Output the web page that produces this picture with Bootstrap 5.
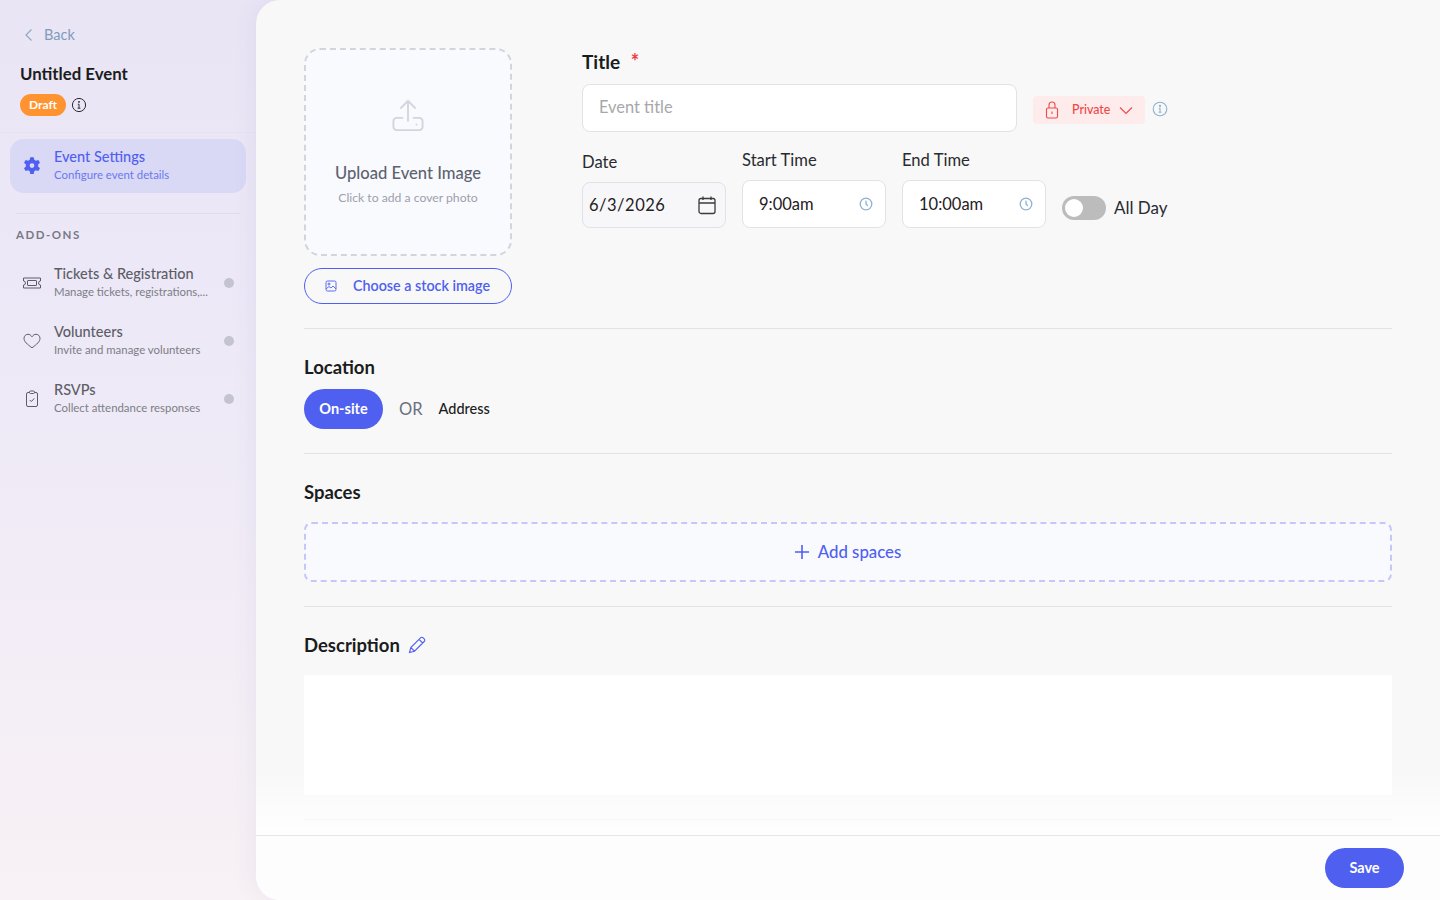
<!DOCTYPE html>
<html lang="en">
<head>
    <meta charset="UTF-8">
    <meta name="viewport" content="width=device-width, initial-scale=1.0">
    <title>Untitled Event</title>
    <link href="https://cdn.jsdelivr.net/npm/bootstrap@5.3.0/dist/css/bootstrap.min.css" rel="stylesheet">
    <style>
        html, body { height: 100%; overflow: hidden; }
        body {
            font-family: "Lato", "Noto Sans", sans-serif;
            color: #1f2024;
            background: linear-gradient(180deg, #e9e5f5 0%, #ece8f7 30%, #f2edf6 70%, #f8f1f5 100%);
        }
        .app-shell { height: 900px; }
        .side-bar { width: 256px; flex: none; }
        .side-top { padding: 26px 20px 0; height: 133px; border-bottom: 1px solid #e6e3f1; }
        .back-link { color: #7f9cbb; font-size: 14.5px; line-height: 18px; padding-left: 4px; gap: 10px; margin-bottom: 19px; }
        .event-name { font-size: 16.8px; font-weight: 700; line-height: 22px; margin-bottom: 9px; color: #1b1c20; }
        .draft-row { gap: 5px; }
        .draft-pill { background: #ff9330; color: #fff; font-size: 12px; font-weight: 700; height: 22px; width: 46px; border-radius: 11px; }
        .side-item { margin: 0 10px; height: 54px; padding-left: 12px; padding-right: 12px; border-radius: 14px; gap: 12px; }
        .side-item.is-active { background: #d9d8f5; margin-top: 6px; }
        .side-ico { width: 20px; flex: none; }
        .item-title { font-size: 14.5px; line-height: 18px; font-weight: 500; color: #5c5d66; white-space: nowrap; }
        .item-sub { font-size: 11.4px; line-height: 16px; margin-top: 1px; margin-bottom: 2px; color: #7c7d86; white-space: nowrap; }
        .is-active .item-title { color: #4f5ff0; }
        .is-active .item-sub { color: #6a78f0; }
        .status-dot { width: 10px; height: 10px; border-radius: 50%; background: #c4c3d0; margin-left: auto; flex: none; }
        .side-rule { margin: 20px 16px 13px; height: 1px; background: #dedbea; }
        .side-label { font-size: 11.5px; font-weight: 700; letter-spacing: 1.5px; color: #787985; padding-left: 16px; line-height: 16px; margin-bottom: 13px; }
        .addon-list { gap: 4px; }
        .main-panel { flex: 1; background: #f8f8f8; border-radius: 24px 0 0 24px; overflow: hidden; min-width: 0; box-shadow: -6px 0 20px rgba(80, 70, 140, .05); }
        .main-scroll { flex: 1; overflow: hidden; padding: 48px 48px 0; position: relative; min-height: 0; }
        .upload-col { width: 208px; flex: none; }
        .upload-box { height: 208px; border: 2px dashed #d3d5de; border-radius: 16px; background: #f9fafe; padding-top: 49px; }
        .upload-title { font-size: 16.6px; line-height: 22px; font-weight: 500; color: #5d6270; margin-top: 29px; }
        .upload-sub { font-size: 12.2px; line-height: 16px; color: #9c9fab; margin-top: 6px; }
        .stock-btn { height: 36px; margin-top: 12px; border: 1px solid #4f5ff0; border-radius: 18px; color: #4f5ff0; font-size: 14.3px; font-weight: 600; padding-left: 20px; gap: 16px; background: transparent; }
        .form-col { margin-left: 70px; }
        .title-label { font-size: 19px; font-weight: 700; line-height: 24px; height: 24px; margin: 2px 0 10px; color: #1b1c20; }
        .req-mark { color: #f23b3b; margin-left: 6px; font-size: 20px; line-height: 1; }
        .field-box { background: #fff; border: 1px solid #e1e1ea; border-radius: 8px; height: 48px; font-size: 16.5px; }
        .title-input { width: 435px; padding-left: 16px; padding-bottom: 2px; color: #a7a7ab; font-size: 16.4px; }
        .private-btn { width: 112px; height: 28px; margin-left: 16px; margin-top: 4px; background: #feebeb; color: #f04848; border-radius: 4px; font-size: 12.4px; font-weight: 500; padding-left: 12px; }
        .private-text { margin-left: 13px; margin-right: 9px; }
        .info-mini { margin-left: 7px; margin-top: 2px; }
        .date-row { margin-top: 18px; }
        .field-label { font-size: 16.6px; line-height: 20px; color: #2a2b30; }
        .date-label { padding-top: 2px; }
        .date-box { width: 144px; background: #f7f7f9; padding: 0 8px 0 6px; margin-top: 10px; height: 46px; letter-spacing: .5px; }
        .time-box { width: 144px; padding: 0 12px 0 16px; margin-top: 10px; }
        .day-toggle { height: 40px; }
        .toggle-track { width: 44px; height: 24px; border-radius: 12px; background: #bcbcbc; padding: 3px 0 0 3px; }
        .toggle-knob { width: 18px; height: 18px; border-radius: 50%; background: #fff; }
        .all-day { font-size: 17px; line-height: 20px; color: #2a2b30; }
        .section-rule { height: 1px; background: #e2e2e4; margin: 24px 0; }
        .section-head { font-size: 18.5px; font-weight: 700; line-height: 28px; color: #1b1c20; }
        .onsite-btn { width: 79px; height: 40px; border-radius: 20px; background: #4f5ff0; color: #fff; font-size: 14.5px; font-weight: 700; margin-top: 8px; }
        .or-text { font-size: 16.5px; color: #6a7080; margin-left: 16px; margin-right: 16px; margin-top: 8px; }
        .addr-text { font-size: 14.5px; font-weight: 500; color: #1b1c20; margin-top: 8px; }
        .spaces-box { height: 60px; border: 2px dashed #c3c8f8; border-radius: 8px; background: #f9fafe; color: #4f5ff0; font-size: 16.8px; font-weight: 500; gap: 9px; margin-top: 16px; }
        .desc-box { height: 120px; background: #fff; margin-top: 16px; }
        .fade-over { position: absolute; left: 0; right: 0; bottom: 0; height: 65px; background: linear-gradient(180deg, rgba(255,255,255,0), rgba(255,255,255,.92)); }
        .foot-bar { height: 65px; flex: none; background: #fdfdfd; border-top: 1px solid #e6e6e6; padding-right: 36px; }
        .save-btn { width: 79px; height: 40px; border-radius: 20px; background: #4f5ff0; color: #fff; font-size: 14.5px; font-weight: 700; }
    </style>
</head>
<body>
    <div class="app-shell d-flex">
        <div class="side-bar">
            <div class="side-top">
                <div class="back-link d-flex align-items-center">
                    <svg width="10" height="14" viewBox="0 0 10 14" fill="none" stroke="#8fa8c4" stroke-width="1.2"><path d="M7.5 1.5 2 7l5.5 5.5"/></svg>
                    <span>Back</span>
                </div>
                <div class="event-name">Untitled Event</div>
                <div class="draft-row d-flex align-items-center">
                    <span class="draft-pill d-inline-flex align-items-center justify-content-center">Draft</span>
                    <svg width="16" height="16" viewBox="0 0 16 16" fill="none" stroke="#2a2b30" stroke-width="1"><circle cx="8" cy="8" r="6.6"/><path d="M6.8 7.2H8v4M6.6 11.2h2.8"/><circle cx="8" cy="4.9" r=".5" fill="#2a2b30"/></svg>
                </div>
            </div>
            <div class="side-item is-active d-flex align-items-center">
                <div class="side-ico d-flex justify-content-center">
                    <svg width="20" height="20" viewBox="0 0 24 24" fill="#4f5ff0"><path fill-rule="evenodd" d="M14 1.5h-4l-.7 3a8 8 0 0 0-2 1.2L4.400 4.700 2.400 8.200l2.300 2a8 8 0 0 0 0 2.400l-2.300 2 2 3.500 2.900-1a8 8 0 0 0 2 1.200l.7 3.200h4l.7-3.200a8 8 0 0 0 2-1.200l2.900 1 2-3.500-2.300-2a8 8 0 0 0 0-2.400l2.300-2-2-3.500-2.900 1a8 8 0 0 0-2-1.200zM12 8.600a2.900 2.900 0 1 1 0 5.800 2.900 2.900 0 0 1 0-5.800z"/></svg>
                </div>
                <div>
                    <div class="item-title">Event Settings</div>
                    <div class="item-sub">Configure event details</div>
                </div>
            </div>
            <div class="side-rule"></div>
            <div class="side-label">ADD-ONS</div>
            <div class="addon-list d-flex flex-column">
                <div class="side-item d-flex align-items-center">
                    <div class="side-ico d-flex justify-content-center">
                        <svg width="20" height="14" viewBox="0 0 20 14" fill="none" stroke="#5c5d66" stroke-width="1"><path d="M1.500 2h17v3a2 2 0 0 0 0 4v3h-17V9a2 2 0 0 0 0-4z"/><rect x="5.500" y="4.500" width="9" height="5" rx=".5"/></svg>
                    </div>
                    <div>
                        <div class="item-title">Tickets &amp; Registration</div>
                        <div class="item-sub">Manage tickets, registrations,...</div>
                    </div>
                    <span class="status-dot"></span>
                </div>
                <div class="side-item d-flex align-items-center">
                    <div class="side-ico d-flex justify-content-center">
                        <svg width="18" height="16" viewBox="0 0 18 16" fill="none" stroke="#5c5d66" stroke-width="1"><path d="M9 14.800C4 11.200 1 8.500 1 5.300 1 3 2.800 1.300 5 1.300c1.600 0 3 .9 4 2.500 1-1.600 2.400-2.500 4-2.500 2.200 0 4 1.700 4 4 0 3.200-3 5.900-8 9.500z"/></svg>
                    </div>
                    <div>
                        <div class="item-title">Volunteers</div>
                        <div class="item-sub">Invite and manage volunteers</div>
                    </div>
                    <span class="status-dot"></span>
                </div>
                <div class="side-item d-flex align-items-center">
                    <div class="side-ico d-flex justify-content-center">
                        <svg width="14" height="18" viewBox="0 0 14 18" fill="none" stroke="#5c5d66" stroke-width="1"><rect x="1.500" y="2.500" width="11" height="14" rx="1.500"/><rect x="4.500" y="1" width="5" height="2.500" rx="1" fill="#f0ecf8"/><path d="m4.800 10 1.500 1.600 3-3.200"/></svg>
                    </div>
                    <div>
                        <div class="item-title">RSVPs</div>
                        <div class="item-sub">Collect attendance responses</div>
                    </div>
                    <span class="status-dot"></span>
                </div>
            </div>
        </div>

        <div class="main-panel d-flex flex-column">
            <div class="main-scroll">
                <div class="d-flex">
                    <div class="upload-col">
                        <div class="upload-box text-center">
                            <svg width="32" height="34" viewBox="0 0 34 36" fill="none" stroke="#d3d5de" stroke-width="2" stroke-linecap="round"><path d="M17 23V3M9.500 9.500 17 2l7.500 7.500"/><path d="M11 20H5a3.500 3.500 0 0 0-3.500 3.500v6A3.500 3.500 0 0 0 5 33h24a3.500 3.500 0 0 0 3.500-3.500v-6A3.500 3.500 0 0 0 29 20h-6"/><circle cx="26" cy="27" r="1" fill="#d3d5de" stroke="none"/></svg>
                            <div class="upload-title">Upload Event Image</div>
                            <div class="upload-sub">Click to add a cover photo</div>
                        </div>
                        <div class="stock-btn d-flex align-items-center">
                            <svg width="12" height="12" viewBox="0 0 12 12" fill="none" stroke="#4f5ff0" stroke-width=".9"><rect x="1" y="1" width="10" height="10" rx="1.500"/><circle cx="4" cy="4" r="1"/><path d="m1 9 3-2.500 2 1.500 2-2 3 3"/></svg>
                            <span>Choose a stock image</span>
                        </div>
                    </div>
                    <div class="form-col">
                        <div class="title-label">Title <span class="req-mark">*</span></div>
                        <div class="d-flex align-items-center">
                            <div class="field-box title-input d-flex align-items-center">Event title</div>
                            <div class="private-btn d-flex align-items-center">
                                <svg width="14" height="18" viewBox="0 0 14 18" fill="none" stroke="#f04848" stroke-width="1.100"><rect x="1.500" y="7" width="11" height="10" rx="1.500"/><path d="M4 7V4a3 3 0 0 1 6 0v3M7 10.500v2.500"/></svg>
                                <span class="private-text">Private</span>
                                <svg width="14" height="9" viewBox="0 0 14 9" fill="none" stroke="#f04848" stroke-width="1.100"><path d="m1 1.500 6 6 6-6"/></svg>
                            </div>
                            <svg class="info-mini" width="16" height="16" viewBox="0 0 16 16" fill="none" stroke="#8fb0d0" stroke-width="1.100"><circle cx="8" cy="8" r="6.800"/><path d="M6.800 7.200H8v4M6.600 11.200h2.800"/><circle cx="8" cy="4.900" r=".5" fill="#8fb0d0"/></svg>
                        </div>
                        <div class="date-row d-flex gap-3">
                            <div>
                                <div class="field-label date-label">Date</div>
                                <div class="field-box date-box d-flex align-items-center justify-content-between">
                                    <span>6/3/2026</span>
                                    <svg width="20" height="20" viewBox="0 0 20 20" fill="none" stroke="#3a3b40" stroke-width="1.300"><rect x="2" y="3.500" width="16" height="15" rx="2"/><path d="M2 8h16M6 1.500v3.500M14 1.500v3.500"/></svg>
                                </div>
                            </div>
                            <div>
                                <div class="field-label">Start Time</div>
                                <div class="field-box time-box d-flex align-items-center justify-content-between">
                                    <span>9:00am</span>
                                    <svg width="14" height="14" viewBox="0 0 14 14" fill="none" stroke="#8fb0d0" stroke-width="1.300"><circle cx="7" cy="7" r="5.800"/><path d="M7 3.800V7l1.800 1.800"/></svg>
                                </div>
                            </div>
                            <div>
                                <div class="field-label">End Time</div>
                                <div class="field-box time-box d-flex align-items-center justify-content-between">
                                    <span>10:00am</span>
                                    <svg width="14" height="14" viewBox="0 0 14 14" fill="none" stroke="#8fb0d0" stroke-width="1.300"><circle cx="7" cy="7" r="5.800"/><path d="M7 3.800V7l1.800 1.800"/></svg>
                                </div>
                            </div>
                            <div class="day-toggle d-flex align-items-center gap-2 align-self-end">
                                <div class="toggle-track"><div class="toggle-knob"></div></div>
                                <span class="all-day">All Day</span>
                            </div>
                        </div>
                    </div>
                </div>
                <div class="section-rule"></div>
                <div class="section-head">Location</div>
                <div class="d-flex align-items-center">
                    <div class="onsite-btn d-flex align-items-center justify-content-center">On-site</div>
                    <span class="or-text">OR</span>
                    <span class="addr-text">Address</span>
                </div>
                <div class="section-rule"></div>
                <div class="section-head">Spaces</div>
                <div class="spaces-box d-flex align-items-center justify-content-center">
                    <svg width="14" height="14" viewBox="0 0 14 14" fill="none" stroke="#4f5ff0" stroke-width="1.600"><path d="M7 0v14M0 7h14"/></svg>
                    <span>Add spaces</span>
                </div>
                <div class="section-rule"></div>
                <div class="section-head d-flex align-items-center gap-2">
                    <span>Description</span>
                    <svg width="18" height="18" viewBox="0 0 18 18" fill="none" stroke="#4f5ff0" stroke-width="1.100"><path d="M1.500 16.500 2.800 11.500 12.500 1.800a1.900 1.900 0 0 1 2.700 0l1 1a1.900 1.900 0 0 1 0 2.700L6.500 15.200zM2.800 11.500l3.700 3.700M11 3.300l3.700 3.700"/></svg>
                </div>
                <div class="desc-box"></div>
                <div class="section-rule"></div>
                <div class="fade-over"></div>
            </div>
            <div class="foot-bar d-flex align-items-center justify-content-end">
                <div class="save-btn d-flex align-items-center justify-content-center">Save</div>
            </div>
        </div>
    </div>
    <script src="https://cdn.jsdelivr.net/npm/bootstrap@5.3.0/dist/js/bootstrap.bundle.min.js"></script>
</body>
</html>
